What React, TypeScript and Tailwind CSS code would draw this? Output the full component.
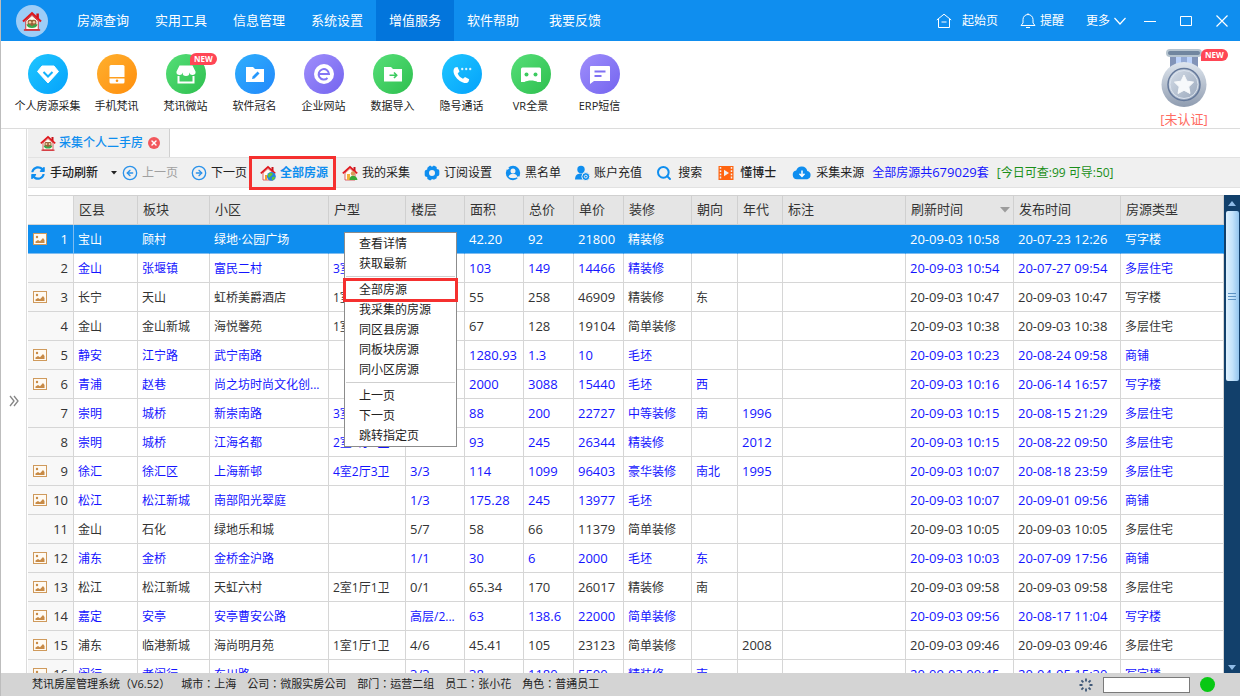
import type { ReactNode } from "react";
import clsx from "clsx";
import { CircleArrowLeft, CircleArrowRight, Search, X } from "lucide-react";
import { FaSyncAlt } from "react-icons/fa";

const MENUS = ["房源查询", "实用工具", "信息管理", "系统设置", "增值服务", "软件帮助"];

const COLUMNS = [
  { label: "区县", width: "w-[64px]" },
  { label: "板块", width: "w-[72px]" },
  { label: "小区", width: "w-[119px]" },
  { label: "户型", width: "w-[77px]" },
  { label: "楼层", width: "w-[59px]" },
  { label: "面积", width: "w-[59px]" },
  { label: "总价", width: "w-[50px]" },
  { label: "单价", width: "w-[50px]" },
  { label: "装修", width: "w-[68px]" },
  { label: "朝向", width: "w-[46px]" },
  { label: "年代", width: "w-[45px]" },
  { label: "标注", width: "" },
  { label: "刷新时间", width: "w-[108px]", sorted: true },
  { label: "发布时间", width: "w-[107px]" },
  { label: "房源类型", width: "w-[103px]" },
];

interface Row { pic: boolean; blue: boolean; cells: string[]; }

const ROWS: Row[] = [
  { pic: true, blue: false, cells: ["宝山","顾村","绿地·公园广场","","","42.20","92","21800","精装修","","","","20-09-03 10:58","20-07-23 12:26","写字楼"] },
  { pic: false, blue: true, cells: ["金山","张堰镇","富民二村","3室2厅2卫","","103","149","14466","精装修","","","","20-09-03 10:54","20-07-27 09:54","多层住宅"] },
  { pic: true, blue: false, cells: ["长宁","天山","虹桥美爵酒店","1室1厅1卫","","55","258","46909","精装修","东","","","20-09-03 10:47","20-09-03 10:47","写字楼"] },
  { pic: false, blue: false, cells: ["金山","金山新城","海悦馨苑","1室1厅1卫","","67","128","19104","简单装修","","","","20-09-03 10:38","20-09-03 10:38","多层住宅"] },
  { pic: true, blue: true, cells: ["静安","江宁路","武宁南路","","","1280.93","1.3","10","毛坯","","","","20-09-03 10:23","20-08-24 09:58","商铺"] },
  { pic: true, blue: true, cells: ["青浦","赵巷","尚之坊时尚文化创...","","","2000","3088","15440","毛坯","西","","","20-09-03 10:16","20-06-14 16:57","写字楼"] },
  { pic: false, blue: true, cells: ["崇明","城桥","新崇南路","3室2厅1卫","","88","200","22727","中等装修","南","1996","","20-09-03 10:15","20-08-15 21:29","多层住宅"] },
  { pic: false, blue: true, cells: ["崇明","城桥","江海名都","2室2厅1卫","2/11","93","245","26344","精装修","","2012","","20-09-03 10:15","20-08-22 09:50","多层住宅"] },
  { pic: true, blue: true, cells: ["徐汇","徐汇区","上海新邨","4室2厅3卫","3/3","114","1099","96403","豪华装修","南北","1995","","20-09-03 10:07","20-08-18 23:59","多层住宅"] },
  { pic: true, blue: true, cells: ["松江","松江新城","南部阳光翠庭","","1/3","175.28","245","13977","毛坯","","","","20-09-03 10:07","20-09-01 09:56","商铺"] },
  { pic: false, blue: false, cells: ["金山","石化","绿地乐和城","","5/7","58","66","11379","简单装修","","","","20-09-03 10:05","20-09-03 10:05","多层住宅"] },
  { pic: true, blue: true, cells: ["浦东","金桥","金桥金沪路","","1/1","30","6","2000","毛坯","东","","","20-09-03 10:03","20-07-09 17:56","商铺"] },
  { pic: true, blue: false, cells: ["松江","松江新城","天虹六村","2室1厅1卫","0/1","65.34","170","26017","精装修","南","","","20-09-03 09:58","20-09-03 09:58","多层住宅"] },
  { pic: true, blue: true, cells: ["嘉定","安亭","安亭曹安公路","","高层/2...","63","138.6","22000","简单装修","","","","20-09-03 09:56","20-08-17 11:04","写字楼"] },
  { pic: true, blue: false, cells: ["浦东","临港新城","海尚明月苑","1室1厅1卫","4/6","45.41","105","23123","简单装修","","2008","","20-09-03 09:46","20-09-03 09:46","多层住宅"] },
  { pic: true, blue: true, cells: ["闵行","老闵行","东川路","","3/3","38","1180","5500","精装修","南","","","20-09-03 09:45","20-04-05 15:30","写字楼"] },
];

const CONTEXT_GROUPS = [
  ["查看详情", "获取最新"],
  ["全部房源", "我采集的房源", "同区县房源", "同板块房源", "同小区房源"],
  ["上一页", "下一页", "跳转指定页"],
];

const STATUS = ["梵讯房屋管理系统（V6.52）", "城市：上海", "公司：微服实房公司", "部门：运营二组", "员工：张小花", "角色：普通员工"];

// text-only values are set a step smaller than the numeric ones
const hasHan = (s: string) => /[\u4e00-\u9fff]/.test(s);

function HouseIcon({ kind = "family", className = "w-4 h-4" }: { kind?: "family" | "globe" | "person"; className?: string }) {
  return (
    <svg viewBox="0 0 16 16" className={clsx("shrink-0", className)} aria-hidden="true">
      <path d="M3 8v7h10V8L8 3.5z" fill="#fffdf0" stroke="#d2262c" strokeWidth=".7" />
      <path d="M11.500 2h2v4h-2z" fill="#c8141c" />
      <path d="M.8 8.400 8 1.800l7.200 6.600" fill="none" stroke="#e0161c" strokeWidth="1.700" />
      {kind === "family" && (
        <>
          <path d="M4.500 11V8.600C4.500 7.200 5.600 6.500 8 7.200c2.400-.7 3.500 0 3.500 1.400V11L8 12.500z" fill="#9a6338" />
          <circle cx="6.400" cy="9" r="1" fill="#f3cfa2" />
          <circle cx="9.600" cy="9" r="1" fill="#f3cfa2" />
          <path d="M3.500 10.800c1.800-.5 3.200.1 4.500 1.500 1.300-1.400 2.700-2 4.500-1.500-.6 2-2.200 2.800-4.500 2.800s-3.900-.8-4.500-2.800z" fill="#37a64a" />
          <path d="M1.500 15.200h13" stroke="#d2262c" strokeWidth="1.200" />
        </>
      )}
      {kind === "globe" && (
        <>
          <path d="M5 10h2v5H5z" fill="#f0a030" />
          <circle cx="11.400" cy="11.400" r="4.400" fill="#2387dd" />
          <path d="M9 8.500c2-1.500 4-.5 3.500 1s-2 1-2.500 2.500-2 0-2-1.200.3-1.700 1-2.300zM12.500 12c1.500-.6 2.500-.3 2.500.6-.4 1.500-1.500 2.500-2.500 2.700-1-1-.8-2.700 0-3.300z" fill="#63c832" />
        </>
      )}
      {kind === "person" && (
        <>
          <path d="M5 9h3v6H5z" fill="#f3b13a" />
          <circle cx="11" cy="8.500" r="2.200" fill="#d89a5b" />
          <path d="M7.500 15c0-3 1.500-4.300 3.500-4.300s4 1.300 4.500 4.300z" fill="#35a836" />
        </>
      )}
    </svg>
  );
}

function PictureIcon() {
  return (
    <svg viewBox="0 0 14 12" className="w-3.5 h-3 shrink-0" aria-label="有图">
      <rect x=".5" y=".5" width="13" height="11" fill="#fffaf2" stroke="#cf9a5c" />
      <circle cx="4" cy="4" r="1.200" fill="#c88a45" />
      <path d="M2.500 10V8.500L5 7l2 1.200L10 5l1.500 2v3z" fill="#c88a45" />
    </svg>
  );
}

const blue = "#0f8eef";

function GearIcon() {
  return (
    <svg viewBox="0 0 16 16" className="w-4 h-4 shrink-0" aria-hidden="true">
      <path fill={blue} fillRule="evenodd" d="M5.600.8h1.200L8 2 9.200.8h1.200l2.200 1.300.2 1.900 1.900.6.600 1.200v3.800l-.6 1.200-1.900.6-.2 1.900-2.200 1.300H9.200L8 14l-1.200 1.200H5.600l-2.200-1.300-.2-1.900-1.900-.6-.6-1.200V6.400l.6-1.200 1.900-.6.2-1.900zM8 5a3 3 0 1 0 0 6 3 3 0 0 0 0-6z" />
    </svg>
  );
}

function BlacklistIcon() {
  return (
    <svg viewBox="0 0 16 16" className="w-4 h-4 shrink-0" aria-hidden="true">
      <circle cx="8" cy="8" r="7.200" fill={blue} />
      <circle cx="8" cy="6" r="2.500" fill="#f0f0f0" />
      <path d="M3.500 11.800C4.200 9.800 6 8.800 8 8.800s3.800 1 4.500 3C11 13 9.500 13.200 8 13.200s-3-.2-4.500-1.400z" fill="#f0f0f0" />
      <path d="M1 2l3.500 1-2 2zM15 14l-3.500-1 2-2z" fill="#f0f0f0" />
    </svg>
  );
}

function AccountIcon() {
  return (
    <svg viewBox="0 0 16 16" className="w-4 h-4 shrink-0" aria-hidden="true">
      <circle cx="7" cy="4.500" r="3.700" fill={blue} />
      <path d="M1 14.500C1 10.500 3 8.500 7 8.500s4 1 4 1l-1 5z" fill={blue} />
      <circle cx="11.800" cy="11.600" r="4" fill={blue} stroke="#f0f0f0" />
      <circle cx="11.800" cy="11.600" r="1.400" fill="none" stroke="#f0f0f0" />
    </svg>
  );
}

function FilmIcon() {
  return (
    <svg viewBox="0 0 16 16" className="w-4 h-4 shrink-0" aria-hidden="true">
      <path d="M.5 1h15v14H.5z" fill="#ff6410" />
      <path d="M2.500 2v12M13.500 2v12" stroke="#f0f0f0" strokeWidth="1.500" strokeDasharray="1.800 1.400" />
      <path d="M6 4.800 11 8l-5 3.200z" fill="#f0f0f0" />
    </svg>
  );
}

function CloudIcon() {
  return (
    <svg viewBox="0 0 20 16" className="w-5 h-4 shrink-0" aria-hidden="true">
      <path d="M5 14.200a4.400 4.400 0 0 1-.8-8.700A5.800 5.800 0 0 1 15.300 6a4.200 4.200 0 0 1 0 8.200z" fill={blue} />
      <path d="M10 5.500v5M7.500 8.800 10 11.400l2.500-2.600" fill="none" stroke="#fff" strokeWidth="1.500" />
    </svg>
  );
}

function MedalIcon() {
  return (
    <svg viewBox="0 0 46 58" className="w-[46px] h-[58px]" aria-hidden="true">
      <defs>
        <linearGradient id="rim" x1="0" y1="0" x2="0" y2="1"><stop offset="0" stopColor="#dfe6ee" /><stop offset="1" stopColor="#8f9cb0" /></linearGradient>
        <linearGradient id="disc" x1="0" y1="0" x2="1" y2="1"><stop offset="0" stopColor="#d8e0ea" /><stop offset="1" stopColor="#98a6ba" /></linearGradient>
      </defs>
      <path d="M9 3h28v16H9z" fill="#8294b8" />
      <path d="M15 5h5v14h-5zM26 5h5v14h-5z" fill="#bcd2fa" />
      <path d="M20 5h6v14h-6z" fill="#93a9d4" />
      <rect x="5" y="0" width="36" height="8" rx="4" fill="#b6c4cf" />
      <rect x="7" y="2" width="32" height="4" rx="2" fill="#71869f" />
      <circle cx="23" cy="35.500" r="22.500" fill="url(#rim)" />
      <circle cx="23" cy="35.500" r="16" fill="url(#disc)" stroke="#64789a" strokeWidth="1.500" />
      <circle cx="23" cy="35.500" r="14" fill="none" stroke="#dbe3ee" strokeWidth="1" />
      <path d="m23 26 3 6.200 6.600.9-4.800 4.700 1.200 6.700L23 41.300l-6 3.200 1.200-6.700-4.800-4.700 6.600-.9z" fill="#f7f9fb" stroke="#f7f9fb" strokeWidth="1" strokeLinejoin="round" />
    </svg>
  );
}

const SERVICES: { label: string; color: string; isNew?: boolean; art: ReactNode }[] = [
  {
    label: "个人房源采集", color: "bg-linear-to-br from-[#1fc6ff] to-[#05a2fb]",
    art: <><path d="M14 12h12l4.500 5.500L20 29 9.500 17.500z" fill="#fff" stroke="#fff" strokeLinejoin="round" /><path d="m15.500 18 4.500 4.500 4.500-4.500" fill="none" stroke="#12b2fc" strokeWidth="2" /></>,
  },
  {
    label: "手机梵讯", color: "bg-linear-to-br from-[#ffb02d] to-[#ff8e08]",
    art: <><path d="M14 11h12a1.500 1.500 0 0 1 1.500 1.500V23h-15V12.500A1.500 1.500 0 0 1 14 11z" fill="#fff" /><path d="M12.500 24.500h15V28a1.500 1.500 0 0 1-1.500 1.500H14a1.500 1.500 0 0 1-1.500-1.500z" fill="#fff" /><circle cx="20" cy="26.700" r="1.300" fill="#ff9512" /></>,
  },
  {
    label: "梵讯微站", color: "bg-linear-to-br from-[#55df78] to-[#2dbf4e]", isNew: true,
    art: <><path d="M13.500 11.500h13l3 6a3 3 0 0 1-6 1 3.500 3.500 0 0 1-7 0 3 3 0 0 1-6-1z" fill="#fff" /><path d="M12.500 22v6.500h15V22" fill="none" stroke="#fff" strokeWidth="2" /></>,
  },
  {
    label: "软件冠名", color: "bg-linear-to-br from-[#2faefc] to-[#2388fb]",
    art: <><path d="M11 13h7l2 2h9v13H11z" fill="#fff" /><path d="m17 25 .6-2.500 5-5 1.900 1.900-5 5z" fill="#2698fc" /></>,
  },
  {
    label: "企业网站", color: "bg-linear-to-br from-[#a08efb] to-[#7464ef]",
    art: <><circle cx="20" cy="20" r="10" fill="#fff" /><path d="M14.500 20h10.500a5.200 5.200 0 1 0-1.500 4" fill="none" stroke="#8576f4" strokeWidth="2" /></>,
  },
  {
    label: "数据导入", color: "bg-linear-to-br from-[#55df78] to-[#2dbf4e]",
    art: <><path d="M11 13h7l2 2h9v12.500H11z" fill="#fff" /><path d="M16.500 21.200h7M21 18.500l2.700 2.700L21 24" fill="none" stroke="#3bcb5f" strokeWidth="1.600" /></>,
  },
  {
    label: "隐号通话", color: "bg-linear-to-br from-[#1fc6ff] to-[#05a2fb]",
    art: <><path d="M13 13.500l2.500-.5 2 4.500-1.800 2c1 2.500 2.800 4.200 5.300 5.200l2-1.700 4.200 2.200-.7 2.600c-1 1.300-3 1.700-5.500.7-4.500-1.800-8-5.300-9.300-9.800-.5-2.200 0-4.200 1.300-5.200z" fill="#fff" /><path d="M19 15h2.400M23 15h2.400M27 15h2.400M20.200 13.800v2.400M24.200 13.800v2.400M28.200 13.800v2.400" stroke="#fff" strokeWidth="1" /></>,
  },
  {
    label: "VR全景", color: "bg-linear-to-br from-[#55df78] to-[#2dbf4e]",
    art: <><path d="M11.500 13.500h17a1.500 1.500 0 0 1 1.500 1.500v13h-3.500c-3-2-10-2-13 0H10V15a1.500 1.500 0 0 1 1.500-1.500z" fill="#fff" /><circle cx="15.500" cy="20.500" r="2" fill="#3bcb5f" /><circle cx="24.500" cy="20.500" r="2" fill="#3bcb5f" /></>,
  },
  {
    label: "ERP短信", color: "bg-linear-to-br from-[#a08efb] to-[#7464ef]",
    art: <><path d="M11 12h18a1 1 0 0 1 1 1v14H14l-4 3V13a1 1 0 0 1 1-1z" fill="#fff" /><path d="M14.500 17.500h11M14.500 22h7" stroke="#8071f3" strokeWidth="1.800" /></>,
  },
];

function NewBadge() {
  return <span className="rounded-full rounded-bl-none bg-[#ff4655] px-1 text-[8px] leading-3 font-bold text-white">NEW</span>;
}

function ToolButton({ icon, label, className }: { icon: ReactNode; label: string; className?: string }) {
  return (
    <button className={clsx("flex items-center gap-1 whitespace-nowrap", className)}>
      {icon}
      <span>{label}</span>
    </button>
  );
}

function TitleBar() {
  return (
    <header className="flex h-[41px] shrink-0 items-center bg-[#0f8eef] pl-[15px] pr-3 text-white">
      <span className="mr-4 flex h-8 w-8 items-center justify-center rounded-full bg-[#9dcdf7]">
        <HouseIcon className="w-5 h-5" />
      </span>
      <nav className="flex h-full gap-1 text-[13px]">
        <div className="flex h-full">
          {MENUS.map(m => (
            <button key={m} className={clsx("h-full px-[13px]", m === "增值服务" && "bg-[#0275dc]")}>{m}</button>
          ))}
        </div>
        <button className="px-[13px]">我要反馈</button>
      </nav>
      <div className="ml-auto flex items-center gap-[18px] text-[12px]">
        <div className="flex items-center gap-[22px]">
          <button className="flex items-center gap-2.5">
            <svg viewBox="0 0 16 16" className="w-4 h-4" fill="none" stroke="#fff" aria-hidden="true">
              <path d="M.8 7 8 1.200 15.200 7M2.500 6v8.500h11V6M5.500 9h5" />
            </svg>
            起始页
          </button>
          <button className="flex items-center gap-1">
            <svg viewBox="0 0 16 16" className="w-4 h-4" fill="none" stroke="#fff" aria-hidden="true">
              <path d="M1 12.500h14L13 10V6.500a5 5 0 0 0-10 0V10zM8 .3v1.500M6 14.500h4" />
            </svg>
            提醒
          </button>
          <button className="flex items-center gap-1">
            更多
            <svg viewBox="0 0 12 8" className="w-3 h-2" fill="none" stroke="#fff" strokeWidth="1.200" aria-hidden="true"><path d="m.5 1 5.500 6 5.500-6" /></svg>
          </button>
        </div>
        <div className="flex items-center gap-6">
          <button aria-label="最小化"><svg viewBox="0 0 12 12" className="w-3 h-3 block"><path d="M0 6.500h12" stroke="#fff" /></svg></button>
          <button aria-label="最大化"><svg viewBox="0 0 12 12" className="w-3 h-3 block"><path d="M.5 1.500h11v9H.5z" stroke="#fff" fill="none" /></svg></button>
          <button aria-label="关闭"><svg viewBox="0 0 12 12" className="w-3 h-3 block"><path d="m.5.5 11 11m0-11-11 11" stroke="#fff" strokeWidth="1.200" /></svg></button>
        </div>
      </div>
    </header>
  );
}

function Ribbon() {
  return (
    <section className="flex h-[88px] shrink-0 justify-between border-b border-[#dcdcdc] pl-3 pr-8">
      <div className="flex pt-[13px]">
        {SERVICES.map(s => (
          <button key={s.label} className="relative flex w-[69px] flex-col items-center gap-1">
            <svg viewBox="0 0 40 40" className={clsx("w-10 h-10 rounded-full", s.color)} aria-hidden="true">{s.art}</svg>
            <span className="text-[11px] leading-4 whitespace-nowrap text-[#222]">{s.label}</span>
            {s.isNew && <span className="absolute left-[39px] -top-px flex"><NewBadge /></span>}
          </button>
        ))}
      </div>
      <button className="relative flex w-12 flex-col items-center gap-1 pt-2">
        <MedalIcon />
        <span className="text-[13px] leading-4 whitespace-nowrap text-[#ff6b61]">[未认证]</span>
        <span className="absolute left-[41px] top-2 flex"><NewBadge /></span>
      </button>
    </section>
  );
}

function Toolbar() {
  return (
    <div className="flex h-[31px] shrink-0 items-center gap-1 border-y border-[#e2e2e2] bg-[#f0f0f0] pl-0.5 text-[12px] text-[#222]">
      <div className="flex items-center gap-3">
        <ToolButton icon={<FaSyncAlt className="w-4 h-3.5 text-[#0f8eef]" />} label="手动刷新" className="font-medium" />
        <button aria-label="刷新选项"><svg viewBox="0 0 8 4" className="w-2 h-1 block"><path d="M1 0h6L4 3.500z" fill="#222" /></svg></button>
      </div>
      <div className="flex items-center gap-3.5">
        <div className="flex items-center gap-[13px]">
          <ToolButton icon={<CircleArrowLeft className="w-4 h-4 text-[#2a92ea]" />} label="上一页" className="text-[#a0a0a0]" />
          <ToolButton icon={<CircleArrowRight className="w-4 h-4 text-[#2a92ea]" />} label="下一页" />
          <div className="relative">
            <ToolButton icon={<HouseIcon kind="globe" />} label="全部房源" className="font-bold text-[#0f8eef]" />
            <span className="pointer-events-none absolute -left-[11px] -right-2 -inset-y-[8px] z-10 border-3 border-[#f5302f]" />
          </div>
        </div>
        <ToolButton icon={<HouseIcon kind="person" />} label="我的采集" />
        <div className="flex items-center gap-[13px]">
          <ToolButton icon={<GearIcon />} label="订阅设置" />
          <ToolButton icon={<BlacklistIcon />} label="黑名单" />
          <ToolButton icon={<AccountIcon />} label="账户充值" />
        </div>
        <div className="flex items-center gap-4">
          <button className="flex items-center gap-1.5"><Search className="w-4 h-4 text-[#0f8eef]" strokeWidth={3} />搜索</button>
          <button className="flex items-center gap-1.5 font-medium"><FilmIcon />懂博士</button>
          <ToolButton icon={<CloudIcon />} label="采集来源" />
        </div>
      </div>
      <p className="flex items-center gap-2 pl-1 whitespace-nowrap">
        <span className="text-[#1414ff]">全部房源共<span className="text-[13px]">679029</span>套</span>
        <span className="text-[#1a8f1a]">[今日可查:99 可导:50]</span>
      </p>
    </div>
  );
}

function HouseTable() {
  return (
    <table className="w-full table-fixed border-separate border-spacing-0 text-left">
      <colgroup>
        <col className="w-[46px]" />
        {COLUMNS.map(c => <col key={c.label} className={c.width} />)}
      </colgroup>
      <thead>
        <tr className="h-[30px] text-[13px] text-[#333]">
          <th className="border-y border-r border-[#d4d4d4] bg-[#f8f8f8] p-0" aria-label="序号" />
          {COLUMNS.map(c => (
            <th key={c.label} className="border-y border-r border-[#d0d0d0] bg-[#e5e5e5] py-0 pl-[5px] pr-[3px] font-normal whitespace-nowrap">
              <span className="flex items-center justify-between">
                {c.label}
                {c.sorted && <svg viewBox="0 0 10 6" className="w-2.5 h-1.5" aria-hidden="true"><path d="M0 0h10L5 5.500z" fill="#9c9c9c" /></svg>}
              </span>
            </th>
          ))}
        </tr>
      </thead>
      <tbody>
        {ROWS.map((row, i) => {
          const selected = i === 0;
          return (
            <tr key={i} className={clsx("h-[29px]", selected ? "bg-[#0f8eef] text-white" : row.blue ? "text-[#1414ff]" : "text-[#333]")}>
              <td className={clsx("border-b border-r py-0 pl-[5px] pr-[5px]", selected ? "border-[#7fbdf0]" : "border-[#d6d6d6] bg-[#f8f8f8] text-[#333]")}>
                <span className="flex items-center">
                  {row.pic && <PictureIcon />}
                  <span className="ml-auto text-[13px] leading-5">{i + 1}</span>
                </span>
              </td>
              {row.cells.map((cell, j) => (
                <td key={j} className={clsx("border-b border-r pb-0 pl-1 pr-0 leading-5 whitespace-nowrap", selected ? "border-b-[#7fbdf0] border-r-[#0f8eef]" : "border-[#d6d6d6]", hasHan(cell) ? "pt-0.5 text-[12px]" : "pt-0 text-[13px]")}>
                  {cell}
                </td>
              ))}
            </tr>
          );
        })}
      </tbody>
    </table>
  );
}

function ContextMenu() {
  return (
    <div role="menu" className="absolute left-[316px] top-[37px] w-[113px] border border-[#8c8c8c] bg-white pt-px text-[12px] text-[#222]">
      {CONTEXT_GROUPS.map((group, g) => (
        <div key={g}>
          {g > 0 && <div className="px-px pt-0.5 pb-[3px]"><div className="h-px bg-[#cfcfcf]" /></div>}
          {group.map(item => (
            <div key={item} className="relative">
              <button role="menuitem" className="block h-5 w-full pl-3.5 text-left leading-5 whitespace-nowrap">{item}</button>
              {item === "全部房源" && <span className="pointer-events-none absolute -inset-x-0.5 -inset-y-0.5 border-3 border-[#f5302f]" />}
            </div>
          ))}
        </div>
      ))}
    </div>
  );
}

function ScrollRail() {
  return (
    <div className="flex w-4 shrink-0 flex-col items-center bg-[#12406b]">
      <button aria-label="向上滚动" className="flex h-4 w-full items-center justify-center">
        <svg viewBox="0 0 8 5" className="w-2 h-[5px]"><path d="M0 5h8L4 0z" fill="#8fbbe6" /></svg>
      </button>
      <div className="flex h-[170px] w-[13px] flex-col items-center justify-center gap-0.5 rounded-xs bg-linear-to-r from-[#dff1fe] via-[#c3e3fb] to-[#93c5ee]">
        <span className="h-px w-2 bg-[#5d93c4]" />
        <span className="h-px w-2 bg-[#5d93c4]" />
        <span className="h-px w-2 bg-[#5d93c4]" />
      </div>
      <button aria-label="向下滚动" className="mt-auto flex h-3 w-full items-center justify-center">
        <svg viewBox="0 0 8 5" className="w-2 h-[5px]"><path d="M0 0h8L4 5z" fill="#8fbbe6" /></svg>
      </button>
    </div>
  );
}

// the TC face centres the full-width colon and brackets
function StatusBar() {
  return (
    <footer className="flex h-[23px] shrink-0 items-center bg-[#d4d4d4] pl-[31px] pr-[25px] text-[11px] text-[#222] font-['Open_Sans','Noto_Sans_CJK_TC',sans-serif] [text-spacing-trim:space-all]">
      <div className="flex gap-[11px] whitespace-nowrap">
        {STATUS.map(s => <span key={s}>{s}</span>)}
      </div>
      <div className="ml-auto flex items-center gap-2.5">
        <svg viewBox="0 0 14 14" className="w-3.5 h-3.5" stroke="#3f5878" strokeWidth="1.800" aria-hidden="true">
          <path d="M7 .5v3M7 10.500v3M.5 7h3M10.500 7h3M2.400 2.400l2 2M9.600 9.600l2 2M2.400 11.600l2-2M9.600 4.400l2-2" />
        </svg>
        <input aria-label="消息" className="h-4 w-[87px] border border-[#7a7a7a] bg-white px-1 outline-none" />
      </div>
      <span className="ml-2.5 h-[15px] w-[15px] rounded-full bg-[#08c814]" />
    </footer>
  );
}

export default function App() {
  return (
    <div className="flex h-screen flex-col overflow-hidden border-l border-[#bdbdbd] bg-white font-['Open_Sans','Noto_Sans_CJK_SC',sans-serif]">
      <TitleBar />
      <Ribbon />
      <div className="flex min-h-0 flex-1">
        <aside className="flex w-[26px] shrink-0 items-center justify-center border-r border-[#dcdcdc]">
          <button aria-label="展开">
            <svg viewBox="0 0 10 12" className="w-2.5 h-3 block" fill="none" stroke="#858585" strokeWidth="1.300"><path d="m1 1 4 5-4 5M5 1l4 5-4 5" /></svg>
          </button>
        </aside>
        <main className="flex min-w-0 flex-1 flex-col pl-px">
          {/* Open pages */}
          <div className="flex h-7 shrink-0">
            <div className="flex items-center gap-[3px] border-r border-[#d0d0d0] bg-[#f0f0f0] pl-3 pr-[9px]">
              <HouseIcon />
              <button className="text-[12px] font-medium text-[#0f8eef]">采集个人二手房</button>
              <button aria-label="关闭标签" className="ml-0.5 flex h-3 w-3 items-center justify-center rounded-full bg-[#f2575c] text-white"><X className="w-2 h-2" strokeWidth={4} /></button>
            </div>
          </div>
          <Toolbar />
          <div className="flex min-h-0 flex-1 pt-[7px]">
            <div className="relative min-w-0 flex-1 overflow-hidden">
              <HouseTable />
              <ContextMenu />
            </div>
            <ScrollRail />
          </div>
        </main>
      </div>
      <StatusBar />
    </div>
  );
}
